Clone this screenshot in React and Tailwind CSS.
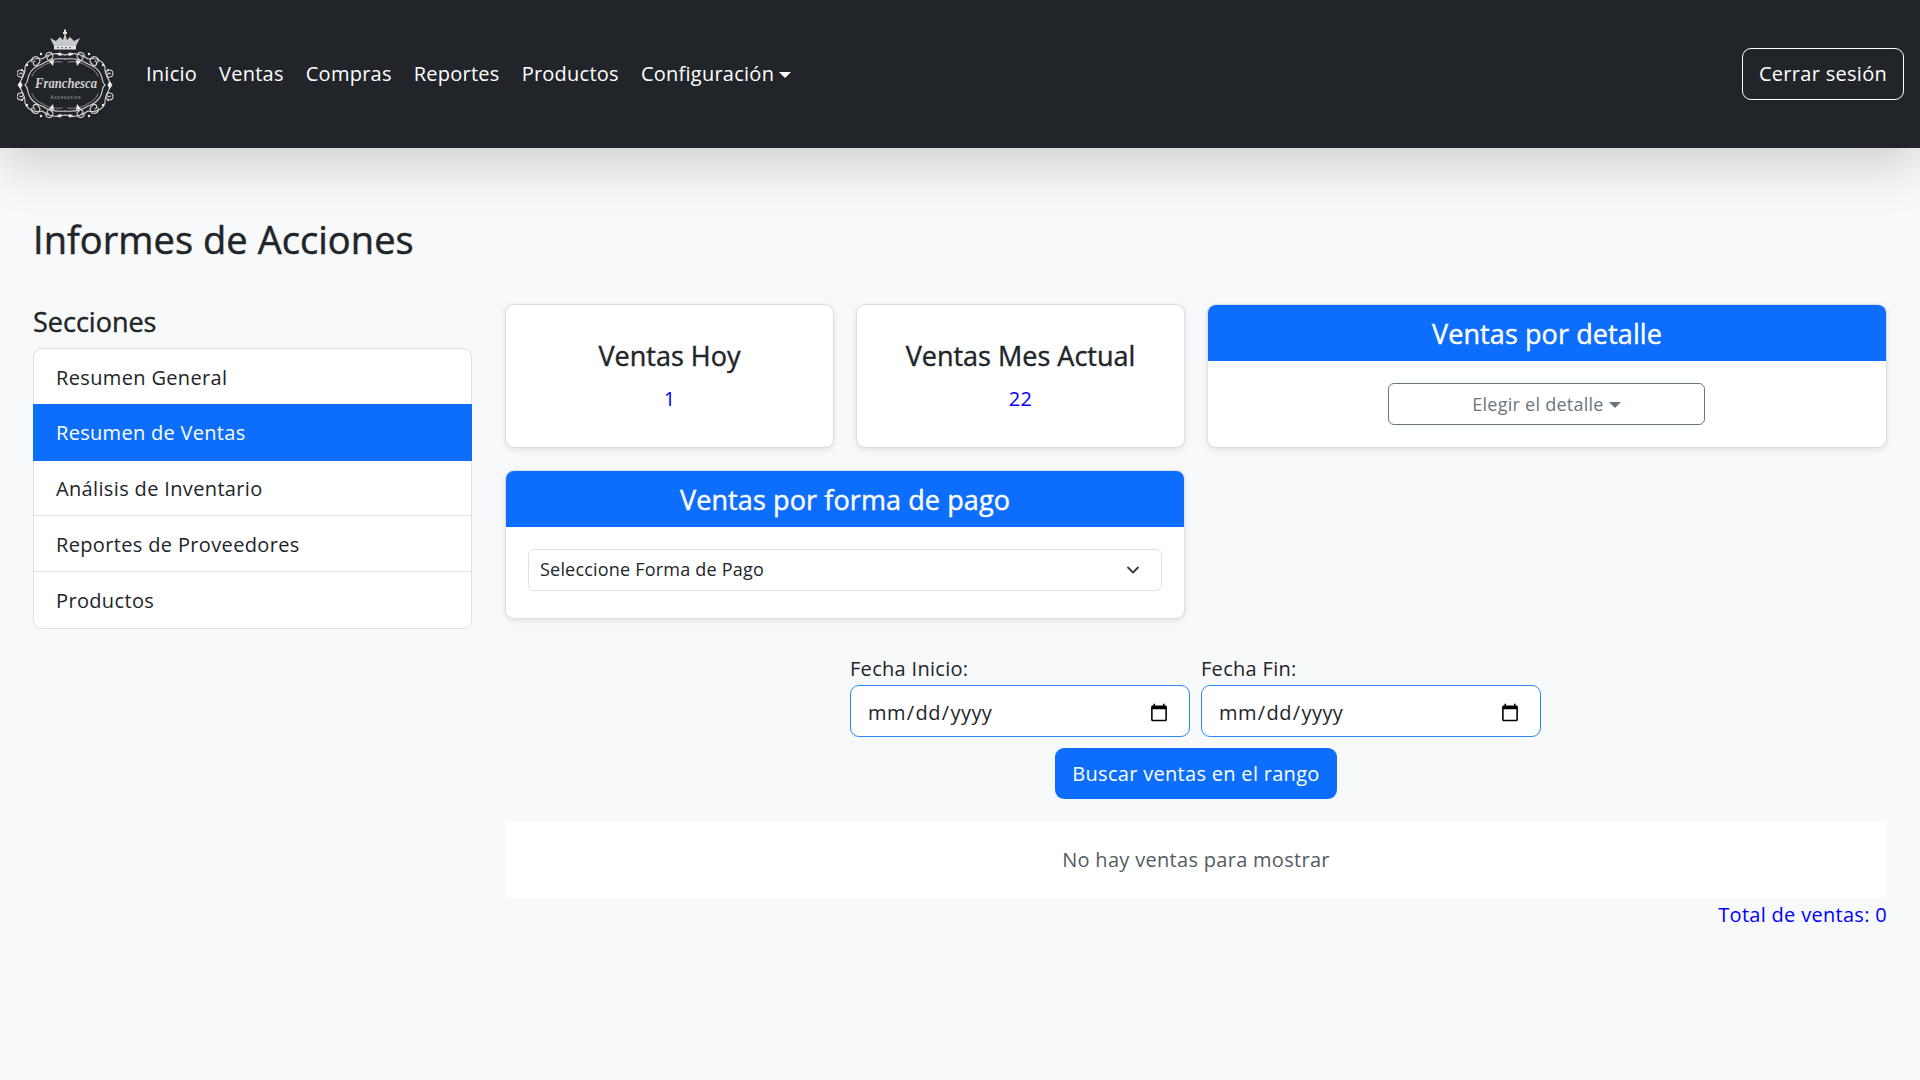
import { ChevronDown } from "lucide-react";

const navLinks = ["Inicio", "Ventas", "Compras", "Reportes", "Productos"];
const sections = ["Resumen General", "Resumen de Ventas", "Análisis de Inventario", "Reportes de Proveedores", "Productos"];

// quarter of the logo's scroll frame, mirrored four times around the centre
function Scroll() {
  return (
    <g fill="none" stroke="#d4d4d4" strokeLinecap="round">
      <path d="M65 55C57 52 48 54 42 59C34 57 27 61 25 67C26 74 21 79 19 85" strokeWidth="1.100" />
      <path d="M65 59C56 58 48 60 42 64C36 66 31 70 29 75C27 80 28 83 25 85" strokeWidth="1.100" />
      <path d="M62 62C54 61 47 63 43 66C38 68 34 71 32 76" strokeWidth=".8" stroke="#a5a5a5" />
      <path d="M32 62a4 4 0 1 1 6 2a2.400 2.400 0 1 1-3-3" strokeWidth="1.200" />
      <path d="M46 57a3.500 3.500 0 1 1 5 2a2 2 0 1 1-2.600-2.600" strokeWidth="1.100" />
      <path d="M24 73a3.500 3.500 0 1 0-4 4a2 2 0 1 0-.5-3" strokeWidth="1.100" />
      <path d="M49 61l4 5l1-6z" fill="#eeeeee" stroke="none" />
      <path d="M57 55l3-3l2 4z" fill="#eeeeee" stroke="none" />
      <path d="M17.500 85l3-4l2 4z" fill="#eeeeee" stroke="none" />
      <circle cx="27" cy="65" r="1.200" fill="#eeeeee" stroke="none" />
      <circle cx="41" cy="54" r="1.200" fill="#eeeeee" stroke="none" />
      <circle cx="22" cy="70" r="1" fill="#eeeeee" stroke="none" />
    </g>
  );
}

function Logo() {
  return (
    <svg viewBox="17 28 97 92" className="w-[97px] h-[92px] shrink-0">
      {/* crown */}
      <path d="M50 38L56 41L60 37L63 40L65 33L67 40L70 37L74 41L80 38L76 46H54Z" fill="#c9c9c9" />
      <path d="M63 33h4M65 29.500v5" stroke="#e0e0e0" strokeWidth="2" />
      <rect x="54" y="46" width="22" height="3.500" fill="#e3e3e3" />
      <path d="M57 47.700h16" stroke="#5c5c5c" strokeWidth="1" strokeDasharray="2 2" />
      <Scroll />
      <g transform="matrix(-1 0 0 1 130 0)"><Scroll /></g>
      <g transform="matrix(1 0 0 -1 0 170)"><Scroll /></g>
      <g transform="matrix(-1 0 0 -1 130 170)"><Scroll /></g>
      <text x="66" y="88" textAnchor="middle" fill="#d0d0d0" fontFamily="Liberation Serif, serif" fontStyle="italic" fontWeight="700" fontSize="14" textLength="62" lengthAdjust="spacingAndGlyphs">Franchesca</text>
      <text x="66" y="98.500" textAnchor="middle" fill="#b0b0b0" fontFamily="Liberation Sans, sans-serif" fontSize="4.500" letterSpacing=".9">Accesorios</text>
    </svg>
  );
}

function Caret() {
  return <span className="inline-block ml-[5px] align-[3px] border-t-[6px] border-x-[6px] border-x-transparent border-t-current" />;
}

function HeaderCard({ title, children, className }) {
  return (
    <div className={`bg-white rounded-[9px] border border-[#dcdde0] shadow-[0_2px_6px_rgba(0,0,0,0.1)] overflow-hidden flex flex-col ${className}`}>
      <div className="bg-[#0d6efd] text-white text-center text-[27px] tracking-[0.1px] [-webkit-text-stroke:0.4px_currentColor] leading-[58px] h-[56px]">{title}</div>
      <div className="flex-1 px-[22px] pt-[22px]">{children}</div>
    </div>
  );
}

function StatCard({ title, value }) {
  return (
    <div className="bg-white rounded-[9px] border border-[#dcdde0] shadow-[0_2px_6px_rgba(0,0,0,0.1)] h-[144px] flex flex-col items-center pt-[31px]">
      <div className="text-[27px] [-webkit-text-stroke:0.4px_currentColor] leading-[40px] text-[#212529]">{title}</div>
      <div className="text-[#0000ff] text-[20px] tracking-[0.3px] leading-[30px] mt-[8px]">{value}</div>
    </div>
  );
}

function DateField({ label }) {
  return (
    <div className="w-[340px]">
      <label className="block text-[20px] tracking-[0.3px] leading-[30px] text-[#212529]">{label}</label>
      <input
        type="date"
        className="block w-full h-[52px] mt-[1px] pl-[16px] pr-[18px] pt-[3px] bg-white rounded-[9px] border border-[#2b8af5] text-[20px] tracking-[0.4px] text-[#212529]"
      />
    </div>
  );
}

export default function App() {
  return (
    <div className="min-h-screen bg-[#f8f9fa] text-[#212529] font-['Open_Sans',sans-serif]">
      {/* navbar */}
      <nav className="h-[148px] bg-[#212529] flex items-center pl-[17px] pr-[16px] shadow-[0_16px_48px_rgba(0,0,0,0.175)] relative">
        <Logo />
        <div className="flex items-center gap-[22px] ml-[32px] text-white text-[20px] tracking-[0.25px]">
          {navLinks.map((l) => (
            <a key={l}>{l}</a>
          ))}
          <a>
            Configuración
            <Caret />
          </a>
        </div>
        <button className="ml-auto w-[162px] h-[52px] rounded-[9px] border border-white text-white text-[20px] tracking-[0.3px]">Cerrar sesión</button>
      </nav>

      <main className="px-[33px] pt-[65px]">
        <h1 className="text-[38px] tracking-[0.05px] [-webkit-text-stroke:0.5px_currentColor] leading-[52px]">Informes de Acciones</h1>
        <div className="flex gap-[33px] mt-[39px]">
          {/* sidebar */}
          <aside className="w-[439px] shrink-0">
            <h2 className="text-[27px] [-webkit-text-stroke:0.4px_currentColor] leading-[36px]">Secciones</h2>
            <ul className="mt-[8px] bg-white rounded-[9px] border border-[#dfe1e6]">
              {sections.map((s, i) => (
                <li
                  key={s}
                  className={
                    i === 1
                      ? "h-[57px] -my-[1px] -mx-[1px] relative bg-[#0d6efd] text-white pl-[23px] text-[20px] tracking-[0.3px] leading-[58px]"
                      : "h-[56px] border-b last:border-b-0 border-[#dfe1e6] pl-[22px] text-[20px] tracking-[0.35px] leading-[57px]"
                  }
                >
                  {s}
                </li>
              ))}
            </ul>
          </aside>

          {/* reports */}
          <section className="flex-1 min-w-0">
            <div className="grid grid-cols-4 gap-[22px]">
              <StatCard title="Ventas Hoy" value="1" />
              <StatCard title="Ventas Mes Actual" value="22" />
              <HeaderCard title="Ventas por detalle" className="col-span-2 h-[144px]">
                <div className="flex justify-center pr-[1px]">
                  <button className="w-[317px] h-[42px] rounded-[6px] border border-[#6c757d] text-[#6c757d] text-[18px] tracking-[0.25px]">
                    Elegir el detalle
                    <Caret />
                  </button>
                </div>
              </HeaderCard>
              <HeaderCard title="Ventas por forma de pago" className="col-span-2 h-[149px]">
                <div className="relative">
                  <select className="block w-full h-[42px] pb-[2px] appearance-none bg-white rounded-[6px] border border-[#dee2e6] pl-[11px] text-[18px] tracking-[0.2px] text-[#212529]">
                    <option>Seleccione Forma de Pago</option>
                  </select>
                  <ChevronDown className="absolute right-[19px] top-[11px] w-[20px] h-[20px] text-[#343a40] pointer-events-none" strokeWidth={2.2} />
                </div>
              </HeaderCard>
            </div>

            <div className="flex justify-center gap-[11px] mt-[35px] pr-[1px]">
              <DateField label="Fecha Inicio:" />
              <DateField label="Fecha Fin:" />
            </div>
            <div className="flex justify-center mt-[11px]">
              <button className="w-[282px] h-[51px] rounded-[9px] bg-[#0d6efd] text-white text-[20px] tracking-[0.3px]">Buscar ventas en el rango</button>
            </div>

            <div className="mt-[22px] h-[77px] bg-white flex items-center justify-center text-[20px] tracking-[0.3px] text-[#555b61]">No hay ventas para mostrar</div>
            <div className="text-right text-[#0000ff] text-[20px] tracking-[0.3px] leading-[32px] mt-[1px]">Total de ventas: 0</div>
          </section>
        </div>
      </main>
    </div>
  );
}
